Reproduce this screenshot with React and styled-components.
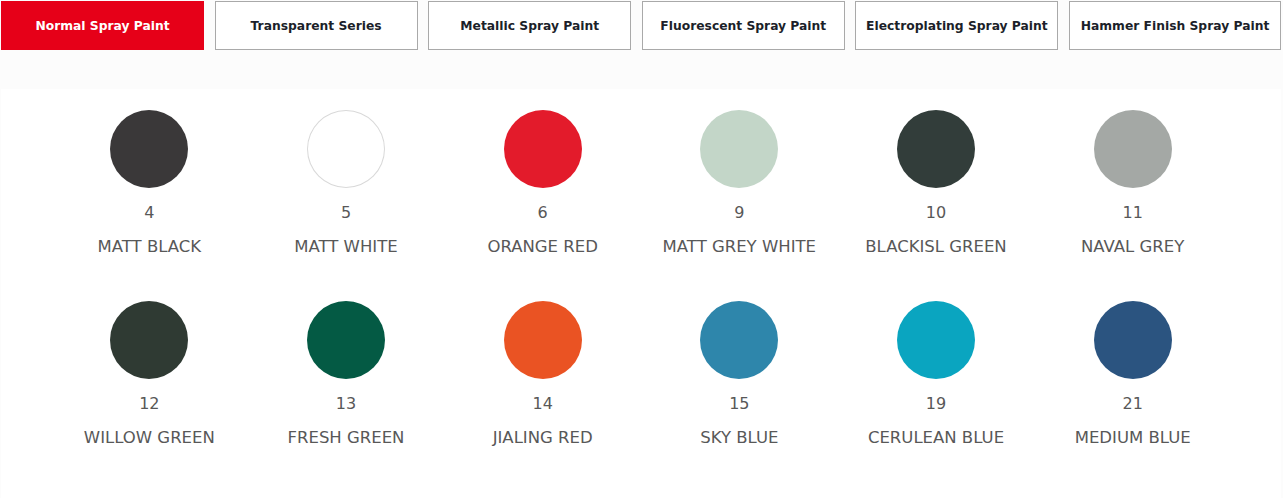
import React, { useState } from "react";
import styled, { createGlobalStyle } from "styled-components";

const GlobalStyle = createGlobalStyle`
  html, body {
    margin: 0;
    padding: 0;
    background: #fcfcfc;
    font-family: "DejaVu Sans", "Noto Sans", sans-serif;
  }
`;

const tabs = [
  "Normal Spray Paint",
  "Transparent Series",
  "Metallic Spray Paint",
  "Fluorescent Spray Paint",
  "Electroplating Spray Paint",
  "Hammer Finish Spray Paint",
];

const colors = [
  { no: "4", name: "MATT BLACK", hex: "#3a3839" },
  { no: "5", name: "MATT WHITE", hex: "#ffffff", ring: true },
  { no: "6", name: "ORANGE RED", hex: "#e31b2b" },
  { no: "9", name: "MATT GREY WHITE", hex: "#c3d6c8" },
  { no: "10", name: "BLACKISL GREEN", hex: "#323d3a" },
  { no: "11", name: "NAVAL GREY", hex: "#a4a8a5" },
  { no: "12", name: "WILLOW GREEN", hex: "#2f3a33" },
  { no: "13", name: "FRESH GREEN", hex: "#045a44" },
  { no: "14", name: "JIALING RED", hex: "#ea5323" },
  { no: "15", name: "SKY BLUE", hex: "#2e86ab" },
  { no: "19", name: "CERULEAN BLUE", hex: "#0aa5c0" },
  { no: "21", name: "MEDIUM BLUE", hex: "#2b5480" },
];

const Page = styled.div`
  width: 1281px;
`;

const TabBar = styled.div`
  display: flex;
  gap: 10.6px;
  padding: 1px 0 0 1px;
`;

const Tab = styled.button`
  box-sizing: border-box;
  flex: 0 0 203px;
  height: 49px;
  padding: 0;
  border: 1px solid ${(p) => (p.$active ? "#e60018" : "#a9a9a9")};
  background: ${(p) => (p.$active ? "#e60018" : "#fff")};
  color: ${(p) => (p.$active ? "#fff" : "#1c1f2a")};
  font-family: inherit;
  font-size: 12.3px;
  font-weight: bold;
  cursor: pointer;
  white-space: nowrap;
  &:last-child {
    flex: 1;
  }
`;

const Panel = styled.div`
  margin-top: 39px;
  margin-left: 1px;
  background: #fff;
  padding: 21px 50px 30px;
  min-height: 358px;
`;

const Grid = styled.div`
  display: grid;
  grid-template-columns: repeat(6, 1fr);
  row-gap: 45px;
`;

const Swatch = styled.div`
  display: flex;
  flex-direction: column;
  align-items: center;
  color: #585858;
`;

const Dot = styled.div`
  width: 78px;
  height: 78px;
  border-radius: 50%;
  background: ${(p) => p.$color};
  box-shadow: ${(p) => (p.$ring ? "inset 0 0 0 1px #d9d9d9" : "none")};
`;

const Num = styled.div`
  margin-top: 16px;
  font-size: 16px;
  line-height: 18px;
`;

const Name = styled.div`
  margin-top: 16px;
  font-size: 16.5px;
  line-height: 18px;
`;

export default function App() {
  const [active, setActive] = useState(0);
  return (
    <Page>
      <GlobalStyle />
      <TabBar>
        {tabs.map((t, i) => (
          <Tab key={t} $active={i === active} onClick={() => setActive(i)}>
            {t}
          </Tab>
        ))}
      </TabBar>
      <Panel>
        <Grid>
          {colors.map((c) => (
            <Swatch key={c.no}>
              <Dot $color={c.hex} $ring={c.ring} />
              <Num>{c.no}</Num>
              <Name>{c.name}</Name>
            </Swatch>
          ))}
        </Grid>
      </Panel>
    </Page>
  );
}
